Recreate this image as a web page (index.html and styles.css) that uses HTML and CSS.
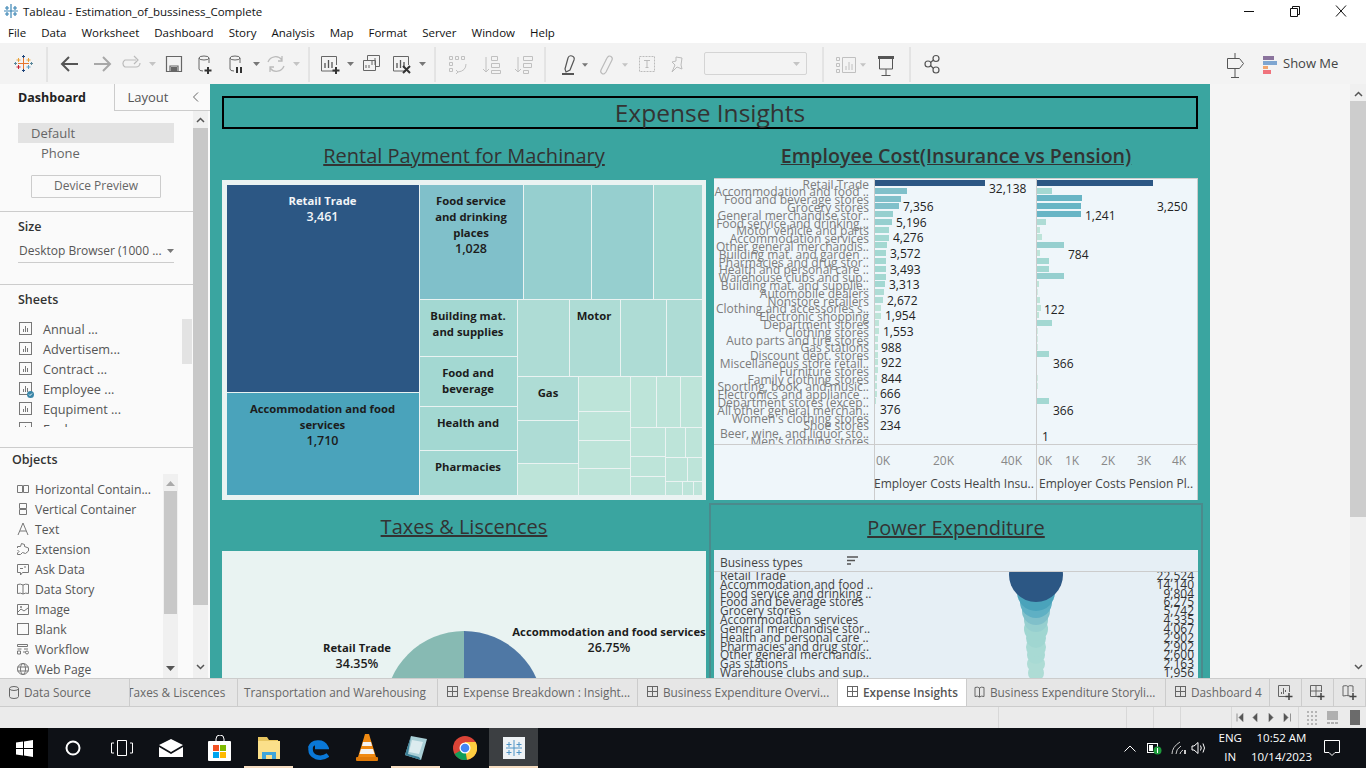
FILE: index.html
```html
<!DOCTYPE html>
<html lang="en">
<head>
    <meta charset="UTF-8">
    <title>Tableau - Estimation_of_bussiness_Complete</title>
    <link rel="stylesheet" href="styles.css">
</head>
<body>
<svg class="defs" width="0" height="0">
    <symbol id="sheet" viewBox="0 0 14 14"><rect x=".5" y=".5" width="12" height="12" fill="none" stroke="#777"/><path d="M4.5 10V7M6.5 10V4M8.5 10V6" stroke="#777"/></symbol>
    <symbol id="dash" viewBox="0 0 12 12"><rect x=".5" y=".5" width="10" height="10" fill="none" stroke="#666"/><path d="M.5 5.5h10M5.5 .5v10" stroke="#666"/></symbol>
    <symbol id="book" viewBox="0 0 12 12"><path d="M1 1.5q2.5-1 4.5.5q2-1.500 4.500-.5v9q-2.500-1-4.500 .5q-2-1.500-4.500-.5zM5.500 2v9" fill="none" stroke="#666"/></symbol>
    <symbol id="caret" viewBox="0 0 7 4"><path d="M0 0h7L3.500 4z" fill="#777"/></symbol>
    <symbol id="caret-off" viewBox="0 0 7 4"><path d="M0 0h7L3.500 4z" fill="#c4c4c4"/></symbol>
</svg>

<div class="app">
    <div class="titlebar">
        <svg class="title-logo" width="16" height="16" viewBox="0 0 16 16"><path d="M8 1v14M1 8h14M4 3v4M2 5h4M12 3v4M10 5h4M4 9v4M2 11h4M12 9v4M10 11h4" stroke="#3c86b5" stroke-width="1.200"/></svg>
        <span class="title-text">Tableau - Estimation_of_bussiness_Complete</span>
        <div class="win-btns">
            <svg width="12" height="12" viewBox="0 0 12 12"><path d="M1 6.500h10" stroke="#111"/></svg>
            <svg width="12" height="12" viewBox="0 0 12 12"><path d="M1.500 3.500h7v8h-7zM3.500 3.500v-2h7v8h-2" fill="none" stroke="#111"/></svg>
            <svg width="12" height="12" viewBox="0 0 12 12"><path d="M1 .5l10 11M11 .5l-10 11" stroke="#111"/></svg>
        </div>
    </div>
    <div class="menubar">
        <span>File</span><span>Data</span><span>Worksheet</span><span>Dashboard</span><span>Story</span><span>Analysis</span><span>Map</span><span>Format</span><span>Server</span><span>Window</span><span>Help</span>
    </div>

    <div class="toolbar">
        <svg class="tb-art" width="1366" height="41" viewBox="0 43 1366 41">
            <!-- logo -->
            <g stroke-width="1">
                <path d="M23.500 58v11M18 63.500h11" stroke="#e8762d"/>
                <path d="M18.500 58v4M16.500 60h4M28.500 58v4M26.500 60h4" stroke="#e9a23b"/>
                <path d="M18.500 65v4M16.500 67h4" stroke="#c72035"/>
                <path d="M28.500 65v4M26.500 67h4" stroke="#5a9bc4"/>
                <path d="M23.500 55v3M22 56.500h3M23.500 69v3M22 70.500h3" stroke="#1f447a"/>
                <path d="M15.500 62v3M14 63.500h3M31.500 62v3M30 63.500h3" stroke="#59879b"/>
            </g>
            <path d="M47 47v35M309 47v35M435 47v35M545 47v35M823 47v35M910 47v35" stroke="#d4d4d4"/>
            <!-- back / forward / redo -->
            <path d="M78 64H63M69 57l-7 7 7 7" fill="none" stroke="#555" stroke-width="2"/>
            <path d="M94 64h15M103 57l7 7-7 7" fill="none" stroke="#a8a8a8" stroke-width="2"/>
            <path d="M136 60h-11a4 4 0 0 0 0 7h11a4 4 0 0 0 4-4M134 56l4 4-4 4" fill="none" stroke="#bbb" stroke-width="1.200"/>
            <use href="#caret-off" x="149" y="62" width="7" height="4"/>
            <!-- save -->
            <path d="M166.500 56.500h15v15h-15zM170 71v-5h8v5" fill="none" stroke="#666" stroke-width="1.200"/><rect x="171" y="67" width="6" height="4" fill="#666"/>
            <!-- data source + -->
            <ellipse cx="204" cy="58" rx="5" ry="2" fill="none" stroke="#666"/>
            <path d="M199 58v11q0 2 4 2M209 58v5" fill="none" stroke="#666"/>
            <path d="M208 67v7M204.500 70.500h7" stroke="#333" stroke-width="2"/>
            <!-- pause -->
            <ellipse cx="235" cy="58" rx="5" ry="2" fill="none" stroke="#666"/>
            <path d="M230 58v11q0 2 4 2M240 58v5" fill="none" stroke="#666"/>
            <path d="M237 67v6M241 67v6" stroke="#333" stroke-width="2"/>
            <use href="#caret" x="253" y="62" width="7" height="4"/>
            <!-- refresh -->
            <path d="M268 62a8 8 0 0 1 14-2M284 66a8 8 0 0 1-14 2M282 56v5h-4M270 72v-5h4" fill="none" stroke="#bbb" stroke-width="1.300"/>
            <use href="#caret-off" x="293" y="62" width="7" height="4"/>
            <!-- new sheet -->
            <path d="M336 71h-14.500V56.500h15V65" fill="none" stroke="#666"/><path d="M325 68v-5M328.500 68v-8M332 68v-6" stroke="#555" stroke-width="1.300"/>
            <path d="M336 67v7M332.500 70.500h7" stroke="#333" stroke-width="2"/>
            <use href="#caret" x="347" y="62" width="7" height="4"/>
            <!-- duplicate -->
            <path d="M367.500 60v-4.500h12v11H376M363.500 60.500h12v10h-12z" fill="#f3f3f3" stroke="#666"/><path d="M372 65v-5M375 65v-7M366 68v-3M369 68v-3" stroke="#666"/>
            <!-- clear -->
            <path d="M406 71h-12.500V56.500h15V65" fill="none" stroke="#666"/><path d="M397 68v-5M400.500 68v-8M404 68v-6" stroke="#555" stroke-width="1.300"/>
            <path d="M403 66l7 7M410 66l-7 7" stroke="#333" stroke-width="2"/>
            <use href="#caret" x="419" y="62" width="7" height="4"/>
            <!-- swap / sort -->
            <g fill="none" stroke="#c0c0c0">
                <path d="M449.500 56.500h3v3h-3zM455.500 56.500h3v3h-3zM461.500 56.500h3v3h-3zM449.500 62.500h3v3h-3zM449.500 68.500h3v3h-3zM466 64q0 7-8 8M456 70l2 2-2 2"/>
                <path d="M486 57v15M483 69l3 3 3-3M491.500 56.500h6v4h-6zM491.500 63.500h8v4h-8zM491.500 70.500h9v3h-9z"/>
                <path d="M518 57v15M515 69l3 3 3-3M523.500 56.500h9v4h-9zM523.500 63.500h8v4h-8zM523.500 70.500h5v3h-5z"/>
            </g>
            <!-- highlight -->
            <path d="M565 69l3-11q1-3 4-2t2 4l-4 10-4 2z" fill="none" stroke="#555" stroke-width="1.200"/><rect x="562" y="73" width="12" height="2" fill="#555"/>
            <use href="#caret" x="582" y="63" width="6" height="4"/>
            <!-- clip -->
            <path d="M601 70l6-12q2-3 4-1.500t1 3.500l-6 12q-2 3-4 1.500t-1-3.500l5-10" fill="none" stroke="#bbb" stroke-width="1.200"/>
            <use href="#caret-off" x="622" y="63" width="6" height="4"/>
            <!-- text box -->
            <rect x="639.500" y="56.500" width="15" height="15" fill="none" stroke="#bbb" stroke-dasharray="2 1"/><path d="M644 60.500h6M647 60.500v7M645.500 67.500h3" fill="none" stroke="#bbb"/>
            <!-- pin -->
            <path d="M676 57l6 1-1 7 1 4-5-2-5 5 3-7-3-3 4-1z" fill="none" stroke="#bbb"/>
            <!-- show cards -->
            <g fill="none" stroke="#c0c0c0"><path d="M836.500 57.500h3v3h-3zM836.500 63.500h3v3h-3zM836.500 69.500h3v3h-3z"/><path d="M842.500 57.500h13v15h-13z"/><path d="M846 70v-4M849 70v-8M852 70v-6"/></g>
            <use href="#caret-off" x="860" y="63" width="6" height="4"/>
            <!-- presentation -->
            <path d="M878 57.500h16M879.500 58v11h13V58M886 69v6M881.500 75.500h9" fill="none" stroke="#555"/><rect x="878" y="56" width="16" height="3" fill="#555"/>
            <!-- share -->
            <g fill="none" stroke="#555" stroke-width="1.200"><circle cx="936" cy="58.500" r="3"/><circle cx="928" cy="64" r="3"/><circle cx="936" cy="70" r="3"/><path d="M933.500 60l-3 2.500M930.500 65.500l3 3"/></g>
            <!-- guide -->
            <path d="M1235 53v5M1235 69v8M1231 77.500h8M1227.500 58.500h12l4 5-4 5h-12z" fill="none" stroke="#555"/>
            <!-- show me -->
            <rect x="1263" y="56" width="11" height="4" fill="#8a739c"/><rect x="1263" y="61" width="14" height="4" fill="#7ea6d1"/><rect x="1263" y="66" width="5" height="3" fill="#f2a66e"/><rect x="1263" y="70" width="8" height="4" fill="#f0737c"/>
        </svg>
        <div class="tb-select"><svg width="7" height="4" viewBox="0 0 7 4"><use href="#caret-off"/></svg></div>
        <span class="show-me">Show Me</span>
    </div>

    <div class="main">
        <aside class="side">
            <div class="side-panel">
                <div class="side-tabs">
                    <div class="side-tab active">Dashboard</div>
                    <div class="side-tab">Layout</div>
                    <div class="side-tab-end"><svg width="7" height="10" viewBox="0 0 7 10"><path d="M6 .5L1.500 5 6 9.500" fill="none" stroke="#666"/></svg></div>
                </div>
                <div class="sec sec-device">
                    <div class="device on">Default</div>
                    <div class="device sub">Phone</div>
                    <div class="device-btn">Device Preview</div>
                </div>
                <div class="sec sec-size">
                    <div class="sec-head">Size</div>
                    <div class="size-select"><span>Desktop Browser (1000 ...</span><svg width="7" height="4" viewBox="0 0 7 4"><use href="#caret"/></svg></div>
                </div>
                <div class="sec sec-sheets">
                    <div class="sec-head">Sheets</div>
                    <div class="sheets-body">
                        <ul class="sheet-list">
                            <li><svg width="14" height="14"><use href="#sheet"/></svg>Annual ...</li>
                            <li><svg width="14" height="14"><use href="#sheet"/></svg>Advertisem...</li>
                            <li><svg width="14" height="14"><use href="#sheet"/></svg>Contract ...</li>
                            <li><svg width="14" height="14"><use href="#sheet"/></svg><svg class="tick" width="7" height="7" viewBox="0 0 7 7"><circle cx="3.500" cy="3.500" r="3.500" fill="#3a86a8"/><path d="M2 3.500l1 1 2-2" fill="none" stroke="#fff"/></svg>Employee ...</li>
                            <li><svg width="14" height="14"><use href="#sheet"/></svg>Equpiment ...</li>
                            <li><svg width="14" height="14"><use href="#sheet"/></svg>Fuel ...</li>
                        </ul>
                        <div class="sheet-scroll"><div class="sheet-thumb"></div></div>
                    </div>
                </div>
                <div class="sec sec-objects">
                    <div class="sec-head">Objects</div>
                    <div class="objects-body">
                        <ul class="object-list">
                            <li><svg width="14" height="14" viewBox="0 0 14 14"><path d="M1.500 3.500h5v7h-5zM7.500 3.500h5v7h-5z" fill="none" stroke="#777"/></svg>Horizontal Contain...</li>
                            <li><svg width="14" height="14" viewBox="0 0 14 14"><path d="M3.500 1.500h7v5h-7zM3.500 7.500h7v5h-7z" fill="none" stroke="#777"/></svg>Vertical Container</li>
                            <li><svg width="14" height="14" viewBox="0 0 14 14"><path d="M2 13L7 1l5 12M4 9h6" fill="none" stroke="#777"/></svg>Text</li>
                            <li><svg width="14" height="14" viewBox="0 0 14 14"><path d="M1.500 6V4.500h3l1-3 3 1v2l4 1.500v3l-3 2.500-3-1-2 2h-3V11l1.500-1.500L1.500 8" fill="none" stroke="#777"/></svg>Extension</li>
                            <li><svg width="14" height="14" viewBox="0 0 14 14"><path d="M1.500 2.500h11v8h-6l-2 2.500v-2.500h-3zM4 6.500h3M8 5h2" fill="none" stroke="#777"/></svg>Ask Data</li>
                            <li><svg width="14" height="14" viewBox="0 0 14 14"><path d="M1.500 2.500q3-1 5.500.5q2.500-1.500 5.500-.5v9q-3-1-5.500 .5q-2.500-1.500-5.500-.5zM7 3v9" fill="none" stroke="#777"/></svg>Data Story</li>
                            <li><svg width="14" height="14" viewBox="0 0 14 14"><path d="M1.500 2.500h11v10h-11zM2 10l3-3 3 2 4-3" fill="none" stroke="#777"/><circle cx="5" cy="5" r="1" fill="#777"/></svg>Image</li>
                            <li><svg width="14" height="14" viewBox="0 0 14 14"><rect x="1.500" y="1.500" width="11" height="11" fill="none" stroke="#777"/></svg>Blank</li>
                            <li><svg width="14" height="14" viewBox="0 0 14 14"><path d="M1.500 2.500h10v2h-10zM1.500 7h4M8 7h4M1.500 9h3v3h-3zM7 10h3" fill="none" stroke="#777"/><circle cx="11" cy="10.500" r="1.500" fill="none" stroke="#777"/></svg>Workflow</li>
                            <li><svg width="14" height="14" viewBox="0 0 14 14"><g fill="none" stroke="#777"><circle cx="7" cy="7" r="5.500"/><ellipse cx="7" cy="7" rx="2.500" ry="5.500"/><path d="M1.500 5h11M1.500 9h11"/></g></svg>Web Page</li>
                        </ul>
                        <div class="obj-scroll">
                            <svg width="9" height="5" viewBox="0 0 9 5"><path d="M4.500 0L9 5H0z" fill="#aaa"/></svg>
                            <div class="obj-thumb"></div>
                            <svg width="9" height="5" viewBox="0 0 9 5"><path d="M4.500 5L9 0H0z" fill="#555"/></svg>
                        </div>
                    </div>
                </div>
            </div>
            <div class="vscroll side-scroll">
                <svg width="9" height="6" viewBox="0 0 9 6"><path d="M1 5l3.500-3.500L8 5" fill="none" stroke="#555" stroke-width="1.500"/></svg>
                <div class="side-thumb"></div>
                <svg class="push" width="9" height="6" viewBox="0 0 9 6"><path d="M1 1l3.500 3.500L8 1" fill="none" stroke="#555" stroke-width="1.500"/></svg>
            </div>
        </aside>

        <section class="dash">
            <div class="dash-title">Expense Insights</div>
            <div class="dash-grid">
                <div class="cell">
                    <h2 class="chart-title">Rental Payment for Machinary</h2>
                    <svg class="treemap" width="484" height="320" viewBox="222 180 484 320">
                        <rect class="c1" x="227" y="185" width="192" height="207"/>
                        <rect class="c2" x="227" y="393" width="192" height="102"/>
                        <rect class="c3" x="420" y="185" width="103" height="114"/>
                        <rect class="c4" x="524" y="185" width="67" height="114"/>
                        <rect class="c4" x="592" y="185" width="61" height="114"/>
                        <rect class="c5" x="654" y="185" width="48" height="114"/>
                        <rect class="c5" x="420" y="300" width="97" height="56"/>
                        <rect class="c5" x="420" y="357" width="97" height="49"/>
                        <rect class="c5" x="420" y="407" width="97" height="43"/>
                        <rect class="c5" x="420" y="451" width="97" height="44"/>
                        <rect class="c6" x="518" y="300" width="51" height="76"/>
                        <rect class="c6" x="570" y="300" width="50" height="76"/>
                        <rect class="c6" x="621" y="300" width="45" height="76"/>
                        <rect class="c6" x="667" y="300" width="35" height="76"/>
                        <rect class="c6" x="518" y="377" width="60" height="43"/>
                        <rect class="c6" x="518" y="421" width="60" height="42"/>
                        <rect class="c7" x="518" y="464" width="60" height="31"/>
                        <rect class="c7" x="579" y="377" width="51" height="34"/>
                        <rect class="c7" x="579" y="412" width="51" height="28"/>
                        <rect class="c7" x="579" y="441" width="51" height="27"/>
                        <rect class="c7" x="579" y="469" width="51" height="26"/>
                        <rect class="c7" x="631" y="377" width="25" height="50"/>
                        <rect class="c7" x="657" y="377" width="23" height="50"/>
                        <rect class="c7" x="681" y="377" width="21" height="50"/>
                        <rect class="c7" x="631" y="428" width="34" height="28"/>
                        <rect class="c7" x="631" y="457" width="34" height="19"/>
                        <rect class="c7" x="631" y="477" width="34" height="18"/>
                        <rect class="c7" x="666" y="428" width="19" height="29"/>
                        <rect class="c7" x="686" y="428" width="16" height="29"/>
                        <rect class="c7" x="666" y="458" width="21" height="23"/>
                        <rect class="c7" x="688" y="458" width="14" height="23"/>
                        <rect class="c7" x="666" y="482" width="16" height="13"/>
                        <rect class="c7" x="683" y="482" width="10" height="13"/>
                        <rect class="c7" x="694" y="482" width="8" height="13"/>
                        <g class="tm-text">
                            <text class="light" x="322.500" y="205">Retail Trade</text>
                            <text class="light val" x="322.500" y="221">3,461</text>
                            <text x="322.500" y="413">Accommodation and food</text>
                            <text x="322.500" y="429">services</text>
                            <text class="val" x="322.500" y="445">1,710</text>
                            <text x="471" y="205">Food service</text>
                            <text x="471" y="221">and drinking</text>
                            <text x="471" y="237">places</text>
                            <text class="val" x="471" y="253">1,028</text>
                            <text x="468" y="320">Building mat.</text>
                            <text x="468" y="336">and supplies</text>
                            <text x="468" y="377">Food and</text>
                            <text x="468" y="393">beverage</text>
                            <text x="468" y="427">Health and</text>
                            <text x="468" y="471">Pharmacies</text>
                            <text x="594" y="320">Motor</text>
                            <text x="548" y="397">Gas</text>
                        </g>
                    </svg>
                </div>
                <div class="cell inset">
                    <h2 class="chart-title short bold">Employee Cost(Insurance vs Pension)</h2>
                    <svg class="bars" width="484" height="322" viewBox="714 178 484 322">
                        <defs><clipPath id="labelClip"><rect x="714" y="180" width="160" height="264"/></clipPath></defs>
                        <path class="rule" d="M714 178.500h484M714 444.500h484M874.500 178v322M1036.500 178v322M1197.500 178v322"/>
                        <g class="bar-labels" clip-path="url(#labelClip)">
                            <text x="869" y="188.500">Retail Trade</text>
                            <text x="869" y="196.300">Accommodation and food ..</text>
                            <text x="869" y="204.100">Food and beverage stores</text>
                            <text x="869" y="211.900">Grocery stores</text>
                            <text x="869" y="219.700">General merchandise stor..</text>
                            <text x="869" y="227.500">Food service and drinking ..</text>
                            <text x="869" y="235.300">Motor vehicle and parts</text>
                            <text x="869" y="243.100">Accommodation services</text>
                            <text x="869" y="250.900">Other general merchandis..</text>
                            <text x="869" y="258.700">Building mat. and garden ..</text>
                            <text x="869" y="266.500">Pharmacies and drug stor..</text>
                            <text x="869" y="274.300">Health and personal care ..</text>
                            <text x="869" y="282.100">Warehouse clubs and sup..</text>
                            <text x="869" y="289.900">Building mat. and supplie..</text>
                            <text x="869" y="297.700">Automobile dealers</text>
                            <text x="869" y="305.500">Nonstore retailers</text>
                            <text x="869" y="313.300">Clothing and accessories s..</text>
                            <text x="869" y="321.100">Electronic shopping</text>
                            <text x="869" y="328.900">Department stores</text>
                            <text x="869" y="336.700">Clothing stores</text>
                            <text x="869" y="344.500">Auto parts and tire stores</text>
                            <text x="869" y="352.300">Gas stations</text>
                            <text x="869" y="360.100">Discount dept. stores</text>
                            <text x="869" y="367.900">Miscellaneous store retail..</text>
                            <text x="869" y="375.700">Furniture stores</text>
                            <text x="869" y="383.500">Family clothing stores</text>
                            <text x="869" y="391.300">Sporting, book, and music..</text>
                            <text x="869" y="399.100">Electronics and appliance ..</text>
                            <text x="869" y="406.900">Department stores (excep..</text>
                            <text x="869" y="414.700">All other general merchan..</text>
                            <text x="869" y="422.500">Women's clothing stores</text>
                            <text x="869" y="430.300">Shoe stores</text>
                            <text x="869" y="438.100">Beer, wine, and liquor sto..</text>
                            <text x="869" y="445.900">Men's clothing stores</text>
                        </g>
                        <g class="bar-rects">
                            <rect class="c1" x="875" y="180" width="110"/>
                            <rect class="c3" x="875" y="188" width="32"/>
                            <rect class="c3" x="875" y="196" width="26"/>
                            <rect class="c3" x="875" y="203" width="24"/>
                            <rect class="c4" x="875" y="211" width="18"/>
                            <rect class="c4" x="875" y="219" width="17"/>
                            <rect class="c5" x="875" y="227" width="14"/>
                            <rect class="c5" x="875" y="235" width="14"/>
                            <rect class="c5" x="875" y="242" width="12"/>
                            <rect class="c5" x="875" y="250" width="11"/>
                            <rect class="c5" x="875" y="258" width="11"/>
                            <rect class="c5" x="875" y="266" width="11"/>
                            <rect class="c5" x="875" y="274" width="11"/>
                            <rect class="c5" x="875" y="281" width="10"/>
                            <rect class="c6" x="875" y="289" width="9"/>
                            <rect class="c6" x="875" y="297" width="8"/>
                            <rect class="c7" x="875" y="305" width="6"/>
                            <rect class="c7" x="875" y="313" width="6"/>
                            <rect class="c7" x="875" y="320" width="4"/>
                            <rect class="c7" x="875" y="328" width="4"/>
                            <rect class="c7" x="875" y="336" width="3"/>
                            <rect class="c7" x="875" y="344" width="3"/>
                            <rect class="c7" x="875" y="352" width="3"/>
                            <rect class="c7" x="875" y="359" width="3"/>
                            <rect class="c7" x="875" y="367" width="3"/>
                            <rect class="c7" x="875" y="375" width="2"/>
                            <rect class="c7" x="875" y="383" width="2"/>
                            <rect class="c7" x="875" y="391" width="2"/>
                            <rect class="c7" x="875" y="398" width="1"/>

                            <rect class="c1" x="1037" y="180" width="116"/>
                            <rect class="c5" x="1037" y="188" width="15"/>
                            <rect class="c9" x="1037" y="195" width="45"/>
                            <rect class="c9" x="1037" y="203" width="44"/>
                            <rect class="c9" x="1037" y="211" width="44"/>
                            <rect class="c6" x="1037" y="219" width="9"/>
                            <rect class="c7" x="1037" y="227" width="3"/>
                            <rect class="c7" x="1037" y="234" width="5"/>
                            <rect class="c4" x="1037" y="242" width="27"/>
                            <rect class="c7" x="1037" y="250" width="3"/>
                            <rect class="c5" x="1037" y="258" width="12"/>
                            <rect class="c5" x="1037" y="266" width="12"/>
                            <rect class="c4" x="1037" y="273" width="27"/>
                            <rect class="c7" x="1037" y="281" width="2"/>
                            <rect class="c8" x="1037" y="289" width="1"/>
                            <rect class="c7" x="1037" y="297" width="3"/>
                            <rect class="c7" x="1037" y="305" width="4"/>
                            <rect class="c7" x="1037" y="312" width="2"/>
                            <rect class="c5" x="1037" y="320" width="15"/>
                            <rect class="c8" x="1037" y="328" width="1"/>
                            <rect class="c8" x="1037" y="336" width="1"/>
                            <rect class="c8" x="1037" y="344" width="1"/>
                            <rect class="c5" x="1037" y="351" width="12"/>
                            <rect class="c8" x="1037" y="375" width="1"/>
                            <rect class="c8" x="1037" y="383" width="1"/>
                            <rect class="c5" x="1037" y="398" width="12"/>
                        </g>
                        <g class="bar-values">
                            <text x="989" y="193">32,138</text>
                            <text x="903" y="211">7,356</text>
                            <text x="896" y="227">5,196</text>
                            <text x="893" y="242">4,276</text>
                            <text x="890" y="258">3,572</text>
                            <text x="890" y="274">3,493</text>
                            <text x="889" y="289">3,313</text>
                            <text x="887" y="305">2,672</text>
                            <text x="885" y="320">1,954</text>
                            <text x="883" y="336">1,553</text>
                            <text x="881" y="352">988</text>
                            <text x="881" y="367">922</text>
                            <text x="881" y="383">844</text>
                            <text x="880" y="398">666</text>
                            <text x="880" y="414">376</text>
                            <text x="880" y="430">234</text>
                            <text x="1157" y="211">3,250</text>
                            <text x="1085" y="220">1,241</text>
                            <text x="1068" y="259">784</text>
                            <text x="1044" y="314">122</text>
                            <text x="1053" y="368">366</text>
                            <text x="1053" y="415">366</text>
                            <text x="1042" y="441">1</text>
                        </g>
                        <g class="axis-ticks">
                            <text x="876" y="465">0K</text><text x="933" y="465">20K</text><text x="1001" y="465">40K</text>
                            <text x="1038" y="465">0K</text><text x="1065" y="465">1K</text><text x="1101" y="465">2K</text><text x="1137" y="465">3K</text><text x="1172" y="465">4K</text>
                        </g>
                        <g class="axis-names">
                            <text x="874" y="488">Employer Costs Health Insu..</text>
                            <text x="1039" y="488">Employer Costs Pension Pl..</text>
                        </g>
                    </svg>
                </div>
                <div class="cell">
                    <h2 class="chart-title">Taxes &amp; Liscences</h2>
                    <svg class="pie" width="484" height="127" viewBox="222 551 484 127">
                        <path class="pie-l" d="M464 631a79 79 0 0 0-79 79h79z"/>
                        <path class="pie-r" d="M464 631a79 79 0 0 1 79 79h-79z"/>
                        <g class="tm-text">
                            <text x="357" y="652">Retail Trade</text>
                            <text class="val" x="357" y="668">34.35%</text>
                            <text x="609" y="636">Accommodation and food services</text>
                            <text class="val" x="609" y="652">26.75%</text>
                        </g>
                    </svg>
                </div>
                <div class="cell power">
                    <h2 class="chart-title power-title">Power Expenditure</h2>
                    <svg class="funnel" width="484" height="128" viewBox="714 550 484 128">
                        <defs><clipPath id="rowClip"><rect x="714" y="572" width="484" height="106"/></clipPath></defs>
                        <text class="head" x="720" y="567">Business types</text>
                        <path class="sort" d="M847 557h11M847 560.500h8M847 564h4"/>
                        <path class="rule" d="M714 571.500h484"/>
                        <g clip-path="url(#rowClip)">
                            <circle class="f7" cx="1036" cy="673" r="8"/>
                            <circle class="f7" cx="1036" cy="664" r="9"/>
                            <circle class="f6" cx="1036" cy="655" r="9"/>
                            <circle class="f6" cx="1036" cy="647" r="10"/>
                            <circle class="f5" cx="1036" cy="638" r="10"/>
                            <circle class="f5" cx="1036" cy="629" r="12"/>
                            <circle class="f4" cx="1036" cy="620" r="12"/>
                            <circle class="f3" cx="1036" cy="611" r="14"/>
                            <circle class="f2b" cx="1036" cy="602" r="16"/>
                            <circle class="f2" cx="1036" cy="592" r="19"/>
                            <circle class="f1" cx="1036" cy="575" r="27"/>
                            <g class="row-labels">
                                <text x="720" y="580">Retail Trade</text>
                                <text x="720" y="589">Accommodation and food ..</text>
                                <text x="720" y="598">Food service and drinking ..</text>
                                <text x="720" y="606">Food and beverage stores</text>
                                <text x="720" y="615">Grocery stores</text>
                                <text x="720" y="624">Accommodation services</text>
                                <text x="720" y="633">General merchandise stor..</text>
                                <text x="720" y="642">Health and personal care ..</text>
                                <text x="720" y="651">Pharmacies and drug stor..</text>
                                <text x="720" y="659">Other general merchandis..</text>
                                <text x="720" y="668">Gas stations</text>
                                <text x="720" y="677">Warehouse clubs and sup..</text>
                            </g>
                            <g class="row-values">
                                <text x="1194" y="580">22,524</text>
                                <text x="1194" y="589">14,140</text>
                                <text x="1194" y="598">9,804</text>
                                <text x="1194" y="606">6,275</text>
                                <text x="1194" y="615">5,742</text>
                                <text x="1194" y="624">4,335</text>
                                <text x="1194" y="633">4,067</text>
                                <text x="1194" y="642">2,902</text>
                                <text x="1194" y="651">2,902</text>
                                <text x="1194" y="659">2,600</text>
                                <text x="1194" y="668">2,163</text>
                                <text x="1194" y="677">1,956</text>
                            </g>
                        </g>
                    </svg>
                </div>
            </div>
        </section>

        <div class="right-gap"></div>
        <div class="vscroll page-scroll">
            <svg width="9" height="6" viewBox="0 0 9 6"><path d="M1 5l3.500-3.500L8 5" fill="none" stroke="#555" stroke-width="1.500"/></svg>
            <div class="page-thumb"></div>
            <svg class="push" width="9" height="6" viewBox="0 0 9 6"><path d="M1 1l3.500 3.500L8 1" fill="none" stroke="#555" stroke-width="1.500"/></svg>
        </div>
    </div>

    <div class="tabs">
        <div class="tab t-source"><svg width="10" height="13" viewBox="0 0 10 13"><path d="M.5 2.500v8q0 2 4.500 2t4.500-2v-8M.5 2.500q0-2 4.500-2t4.500 2-4.500 2-4.500-2z" fill="none" stroke="#666"/></svg>Data Source</div>
        <div class="tab t-taxes"><span>Taxes &amp; Liscences</span></div>
        <div class="tab t-trans">Transportation and Warehousing</div>
        <div class="tab t-wide"><svg width="12" height="12"><use href="#dash"/></svg>Expense Breakdown : Insight...</div>
        <div class="tab t-wide"><svg width="12" height="12"><use href="#dash"/></svg>Business Expenditure Overvi...</div>
        <div class="tab t-active"><svg width="12" height="12"><use href="#dash"/></svg>Expense Insights</div>
        <div class="tab t-story"><svg width="12" height="12"><use href="#book"/></svg>Business Expenditure Storyli...</div>
        <div class="tab t-dash4"><svg width="12" height="12"><use href="#dash"/></svg>Dashboard 4</div>
        <div class="tab t-add"><svg width="17" height="17" viewBox="0 0 17 17"><path d="M9 12.500H1.500v-11h11V8" fill="none" stroke="#666"/><path d="M4.500 10V8M6.500 10V4M8.500 8V6" stroke="#666"/><path d="M12 9v7M8.500 12.500h7" stroke="#444" stroke-width="1.500"/></svg></div>
        <div class="tab t-add"><svg width="17" height="17" viewBox="0 0 17 17"><path d="M9 12.500H1.500v-11h11V8M1.500 7h11M7 1.500v11" fill="none" stroke="#666"/><path d="M12 9v7M8.500 12.500h7" stroke="#444" stroke-width="1.500"/></svg></div>
        <div class="tab t-add"><svg width="17" height="17" viewBox="0 0 17 17"><path d="M9 12q-3-1-7 0V2q4-1 5 .5q1-1.500 5-.5v6M7 2.500V12" fill="none" stroke="#666"/><path d="M12 9v7M8.500 12.500h7" stroke="#444" stroke-width="1.500"/></svg></div>
    </div>

    <div class="status">
        <div class="st-cell st-fill"></div>
        <div class="st-cell st-w128"></div>
        <div class="st-cell st-w27"></div>
        <div class="st-cell st-w27"></div>
        <div class="st-cell st-w51"></div>
        <div class="st-cell st-nav">
            <svg width="60" height="9" viewBox="0 0 60 9"><path d="M1 .5v8M7 .5L3 4.500l4 4zM21 .5l-4 4 4 4zM33 .5l4 4-4 4zM48 .5l4 4-4 4zM54.500 .5v8" fill="#555" stroke="#555" stroke-width=".6"/></svg>
        </div>
        <div class="st-view">
            <svg width="60" height="15" viewBox="0 0 60 15"><path d="M1 1h2v2H1zM5 1h2v2H5zM9 1h2v2H9zM1 5h2v2H1zM5 5h2v2H5zM9 5h2v2H9zM1 9h2v2H1zM5 9h2v2H5zM9 9h2v2H9zM1 13h2v2H1zM5 13h2v2H5zM9 13h2v2H9z" fill="#b5b5b5"/><rect x="21" y="1" width="11" height="9" fill="#b0b0b0"/><path d="M21 12h3v2h-3zM25 12h3v2h-3zM29 12h3v2h-3z" fill="#b0b0b0"/><rect x="44" y="0" width="10" height="15" fill="#6b6b6b"/></svg>
        </div>
    </div>

    <div class="taskbar">
        <div class="start"><svg width="17" height="17" viewBox="0 0 17 17"><path d="M0 2.500l7-1v6.500H0zM8 1.400l9-1.400v8H8zM0 9h7v6.500l-7-1zM8 9h9v8l-9-1.400z" fill="#fff"/></svg></div>
        <div class="task-icons">
            <div class="ti"><svg width="16" height="16" viewBox="0 0 16 16"><circle cx="8" cy="8" r="6.500" fill="none" stroke="#fff" stroke-width="2"/></svg></div>
            <div class="ti"><svg width="22" height="16" viewBox="0 0 22 16"><path d="M6.500 .5h9v15h-9zM3 3H.5v10H3M19 3h2.500v10H19" fill="none" stroke="#fff"/></svg></div>
            <div class="ti"><svg width="24" height="18" viewBox="0 0 24 18"><path d="M0 6l12-6 12 6-12 7zM0 8l12 7 12-7v10H0z" fill="#fff"/></svg></div>
            <div class="ti"><svg width="24" height="26" viewBox="0 0 24 26"><path d="M8 7V4a4 4 0 0 1 8 0v3" fill="none" stroke="#fff"/><rect y="6" width="23" height="20" rx="1" fill="#fff"/><rect x="5" y="10" width="6" height="6" fill="#f25022"/><rect x="12" y="10" width="6" height="6" fill="#7fba00"/><rect x="5" y="17" width="6" height="6" fill="#00a4ef"/><rect x="12" y="17" width="6" height="6" fill="#ffb900"/></svg></div>
            <div class="ti ti-run"><svg width="22" height="22" viewBox="0 0 22 22"><path d="M0 0h9l2 3h9v4H0z" fill="#e8c660"/><rect y="4" width="22" height="18" fill="#fbe08a"/><rect x="4" y="15" width="14" height="7" fill="#3fa5d9"/><rect x="8" y="18" width="6" height="4" fill="#fbe08a"/></svg></div>
            <div class="ti"><svg width="22" height="24" viewBox="0 0 22 24"><path d="M3 12a8.500 7.500 0 0 1 16-1H8M4 10q-2 8 5 11q7 2 12-2" fill="none" stroke="#0a78d7" stroke-width="4.500"/></svg></div>
            <div class="ti"><svg width="22" height="28" viewBox="0 0 22 28"><path d="M9 0h4l7 23H2z" fill="#f08a12"/><path d="M7 8h8l1 4H6zM5 15h12l1.500 5h-15z" fill="#f4f4f4"/><rect y="23" width="22" height="4" rx="1" fill="#e07a08"/></svg></div>
            <div class="ti ti-run"><svg width="24" height="26" viewBox="0 0 24 26"><path d="M7 1l16 3-6 21L1 20z" fill="#a9cfd6"/><path d="M7 1l-6 19 16 5-2-3-11-3z" fill="#3b7f96"/><path d="M8 5l11 2-4 12-10-2z" fill="#dcecef"/></svg></div>
            <div class="ti"><svg width="24" height="24" viewBox="0 0 24 24"><circle cx="12" cy="12" r="12" fill="#db4437"/><path d="M12 12L1.600 18A12 12 0 0 0 14 23.800z" fill="#0f9d58"/><path d="M12 6h10.600A12 12 0 0 1 14 23.800L12 12z" fill="#ffcd40"/><circle cx="12" cy="12" r="5.500" fill="#fff"/><circle cx="12" cy="12" r="4.300" fill="#4285f4"/></svg></div>
            <div class="ti ti-active ti-run"><svg width="22" height="22" viewBox="0 0 22 22"><rect width="22" height="22" fill="#eef2f5"/><path d="M11 3v16M3 11h16M6 5v5M3.500 7.500h5M16 5v5M13.500 7.500h5M6 13v5M3.500 15.500h5M16 13v5M13.500 15.500h5" stroke="#4f94c6"/></svg></div>
        </div>
        <div class="tray">
            <svg class="tray-a" width="12" height="7" viewBox="0 0 12 7"><path d="M.5 6.500L6 1l5.500 5.500" fill="none" stroke="#fff"/></svg>
            <svg class="tray-b" width="15" height="13" viewBox="0 0 15 13"><rect x=".5" y="1.500" width="10" height="9" fill="none" stroke="#fff"/><rect x="2" y="3" width="4" height="6" fill="#fff"/><circle cx="10.500" cy="8.500" r="4" fill="#1e9b3c"/><path d="M10.500 6v5" stroke="#fff"/></svg>
            <svg class="tray-c" width="16" height="14" viewBox="0 0 16 14"><path d="M1 13q0-7 8-12M5 13q0-5 5-8M9 13q0-2 3-4" fill="none" stroke="#ccc"/><path d="M13 9h2v4h-2z" fill="#ccc"/></svg>
            <svg class="tray-d" width="16" height="14" viewBox="0 0 16 14"><path d="M1 5h2l4-3.500v11L3 9H1zM9.500 4.500q1.500 2.500 0 5M12 2.500q3 4.500 0 9" fill="none" stroke="#fff"/></svg>
            <div class="tray-lang"><span>ENG</span><span>IN</span></div>
            <div class="tray-time"><span>10:52 AM</span><span>10/14/2023</span></div>
            <svg class="tray-note" width="16" height="16" viewBox="0 0 16 16"><path d="M.5 .5h15v12H11l-3 3-3-3H.5z" fill="none" stroke="#fff"/></svg>
        </div>
    </div>
</div>
</body>
</html>
```

FILE: styles.css
```css
* {
    box-sizing: border-box;
}
html, body {
    margin: 0;
    padding: 0;
    overflow: hidden;
}
body {
    font-family: "Open Sans", "Noto Sans", sans-serif;
    font-size: 12px;
    color: #333;
}
ul {
    list-style: none;
    margin: 0;
    padding: 0;
}
svg {
    display: block;
    flex: none;
}
.defs {
    position: absolute;
}
.app {
    width: 1366px;
    height: 768px;
    display: flex;
    flex-direction: column;
    background: #fff;
}

/* window chrome */
.titlebar {
    height: 22px;
    display: flex;
    align-items: center;
    padding-left: 3px;
    background: #fff;
}
.title-text {
    margin-left: 4px;
    font-size: 11.5px;
    color: #111;
}
.win-btns {
    margin-left: auto;
    display: flex;
    gap: 34px;
    padding-right: 19px;
}
.menubar {
    height: 21px;
    display: flex;
    align-items: center;
    padding-left: 8px;
    gap: 15px;
    font-size: 11.5px;
    color: #111;
}
.toolbar {
    height: 41px;
    position: relative;
    background: #f3f3f3;
}
.tb-art {
    position: absolute;
    left: 0;
    top: 0;
}
.tb-select {
    position: absolute;
    left: 704px;
    top: 9px;
    width: 103px;
    height: 23px;
    border: 1px solid #d4d4d4;
    border-radius: 2px;
    display: flex;
    align-items: center;
    justify-content: flex-end;
    padding-right: 6px;
}
.show-me {
    position: absolute;
    left: 1283px;
    top: 11px;
    font-size: 13px;
    color: #444;
}

/* main area */
.main {
    height: 594px;
    display: flex;
    overflow: hidden;
    background: #f5f5f5;
}
.side {
    width: 210px;
    display: flex;
    background: #fafafa;
}
.side-panel {
    width: 193px;
    display: flex;
    flex-direction: column;
}
.side-tabs {
    height: 27px;
    display: flex;
    width: 210px;
    font-size: 13px;
    flex: none;
    position: relative;
    z-index: 1;
}
.side-tab {
    display: flex;
    align-items: center;
    justify-content: center;
    color: #555;
    width: 67px;
    border-left: 1px solid #ccc;
    border-bottom: 1px solid #ccc;
}
.side-tab.active {
    width: 114px;
    border: none;
    font-size: 12.5px;
    font-weight: 700;
    color: #222;
    background: #fafafa;
    justify-content: flex-start;
    padding: 0 0 1px 18px;
}
.side-tab-end {
    flex: 1;
    display: flex;
    align-items: center;
    justify-content: center;
    border-bottom: 1px solid #ccc;
}
.sec {
    flex: none;
    border-bottom: 1px solid #ccc;
    padding-left: 18px;
}
.sec-head {
    font-size: 12.5px;
    font-weight: 600;
    color: #333;
}
.sec-device {
    height: 101px;
    padding-top: 12px;
    font-size: 13px;
    color: #666;
}
.device {
    width: 156px;
    height: 20px;
    line-height: 20px;
    padding-left: 13px;
}
.device.on {
    background: #e3e3e3;
}
.device.sub {
    padding-left: 23px;
}
.device-btn {
    margin: 12px 0 0 13px;
    width: 130px;
    height: 23px;
    line-height: 20px;
    text-align: center;
    border: 1px solid #ccc;
    border-radius: 1px;
    font-size: 12px;
    color: #666;
}
.sec-size {
    height: 73px;
    padding-top: 6px;
}
.size-select {
    margin-top: 6px;
    width: 156px;
    height: 22px;
    border-bottom: 1px solid #ccc;
    display: flex;
    align-items: center;
    justify-content: space-between;
    padding: 0 0 2px 1px;
    font-size: 12px;
    color: #555;
}
.sec-sheets {
    height: 163px;
    padding-top: 6px;
    border-bottom: 1px solid #ccc;
}
.sheets-body {
    display: flex;
    margin-top: 11px;
    height: 108px;
    margin-left: 1px;
}
.sheet-list {
    flex: 1;
    overflow: hidden;
}
.sheet-list li {
    height: 20px;
    display: flex;
    align-items: center;
    gap: 10px;
    font-size: 12.7px;
    color: #555;
    position: relative;
}
.tick {
    position: absolute;
    left: 8px;
    top: 12px;
}
.sheet-scroll {
    width: 10px;
    margin-right: 1px;
    background: #fafafa;
}
.sheet-thumb {
    height: 45px;
    background: #e3e3e3;
}
.sec-objects {
    flex: 1;
    border-bottom: none;
    padding: 3px 0 0 12px;
}
.objects-body {
    display: flex;
    height: 207px;
    margin-top: 6px;
}
.object-list {
    flex: 1;
    padding-top: 5px;
}
.object-list li {
    height: 20px;
    display: flex;
    align-items: center;
    gap: 5px;
    font-size: 12.2px;
    color: #555;
    margin-left: 4px;
}
.obj-scroll {
    width: 15px;
    margin-right: 15px;
    background: #f0f0f0;
    display: flex;
    flex-direction: column;
    align-items: center;
    padding-top: 7px;
}
.obj-thumb {
    width: 13px;
    height: 123px;
    margin: 5px 0 52px;
    background: #c8c8c8;
}
.vscroll {
    display: flex;
    flex-direction: column;
    align-items: center;
    background: #f0f0f0;
}
.push {
    margin-top: auto;
    margin-bottom: 8px;
}
.side-scroll {
    width: 15px;
    margin-top: 26px;
    padding-top: 7px;
}
.side-thumb {
    width: 15px;
    height: 477px;
    margin-top: 5px;
    background: #c8c8c8;
}

/* dashboard canvas */
.dash {
    width: 1000px;
    flex: none;
    padding: 12px 7px 0 12px;
    background: #3aa5a0;
    overflow: hidden;
}
.dash-title {
    width: 976px;
    height: 33px;
    border: 2px solid #000;
    text-align: center;
    font-size: 24.500px;
    line-height: 29px;
    color: #333;
}
.dash-grid {
    display: grid;
    grid-template-columns: 484px 494px;
    column-gap: 3px;
}
.inset {
    padding: 0 5px;
}
.chart-title {
    margin: 0;
    height: 51px;
    line-height: 54px;
    text-align: center;
    font-size: 20px;
    font-weight: 400;
    color: #333;
    text-decoration: underline;
}
.chart-title.short {
    height: 49px;
    line-height: 54px;
}
.chart-title.bold {
    font-size: 19.600px;
    font-weight: 600;
}
.power {
    margin-top: 3px;
    height: 180px;
    border: 2px solid #4b8a8c;
    border-bottom: none;
    padding: 0 3px;
}
.power-title {
    height: 45px;
    line-height: 45px;
}

/* charts */
.c1 { fill: #2c5784; }
.c2 { fill: #4aa3bb; }
.c3 { fill: #80c0ca; }
.c4 { fill: #96cfcf; }
.c5 { fill: #a3d8d2; }
.c6 { fill: #aedcd5; }
.c7 { fill: #bde4d9; }
.c8 { fill: #d0ebe3; }
.c9 { fill: #68b5c5; }
.treemap {
    background: #eaf3f2;
}
.tm-text text {
    font-size: 11.300px;
    font-weight: 700;
    text-anchor: middle;
    fill: #1c1c1c;
}
.tm-text .light {
    fill: #f2f5f8;
}
.tm-text .val {
    font-size: 12.500px;
    font-weight: 600;
}
.bars {
    background: #eff6fa;
}
.bars .rule,
.funnel .rule {
    stroke: #ccc;
    fill: none;
}
.bar-labels text {
    font-size: 12px;
    text-anchor: end;
    fill: #7c7c7c;
}
.bar-rects rect {
    height: 6px;
}
.bar-values text {
    font-size: 12px;
    fill: #222;
}
.axis-ticks text {
    font-size: 12px;
    fill: #888;
}
.axis-names text {
    font-size: 12px;
    fill: #444;
}
.pie {
    background: #e9f3f2;
}
.pie-l { fill: #87bab3; }
.pie-r { fill: #4f78a5; }
.funnel {
    background: #e6eff5;
}
.funnel .head {
    font-size: 12px;
    fill: #444;
}
.funnel .sort {
    stroke: #555;
    stroke-width: 1.500;
}
.f1 { fill: #2c5784; }
.f2 { fill: #4aa3bb; }
.f2b { fill: #5fb0c4; }
.f3 { fill: #80c0ca; }
.f4 { fill: #96cfcf; }
.f5 { fill: #a0d6d1; }
.f6 { fill: #a8dad4; }
.f7 { fill: #aedcd5; }
.row-labels text {
    font-size: 11.900px;
    fill: #444;
}
.row-values text {
    font-size: 12px;
    text-anchor: end;
    fill: #333;
}
.right-gap {
    width: 140px;
    flex: none;
}
.page-scroll {
    width: 16px;
    padding-top: 7px;
}
.page-thumb {
    width: 16px;
    height: 416px;
    margin-top: 4px;
    background: #cdcdcd;
}

/* sheet tabs */
.tabs {
    height: 29px;
    display: flex;
    flex: none;
    background: #e6e6e6;
    border-top: 1px solid #ccc;
    border-bottom: 1px solid #ccc;
    font-size: 11.800px;
    color: #666;
}
.tab {
    display: flex;
    align-items: center;
    gap: 4px;
    border-right: 1px solid #ccc;
    white-space: nowrap;
    overflow: hidden;
    padding: 0 0 1px 9px;
}
.t-source { width: 130px; gap: 5px; }
.t-taxes { width: 108px; padding-left: 0; }
.t-taxes span { margin-left: -3px; }
.t-trans { width: 200px; padding-left: 6px; }
.t-wide { width: 200px; }
.t-active {
    width: 129px;
    background: #fff;
    font-weight: 600;
    color: #555;
}
.t-story { width: 199px; padding-left: 7px; }
.t-dash4 { width: 104px; }
.t-add { width: 32px; padding-left: 7px; }

/* status bar */
.status {
    height: 21px;
    display: flex;
    flex: none;
    background: #ebebeb;
}
.st-cell {
    border-right: 1px solid #d8d8d8;
    flex: none;
}
.st-fill { width: 999px; }
.st-w128 { width: 128px; }
.st-w27 { width: 27px; }
.st-w51 { width: 51px; }
.st-nav {
    width: 67px;
    display: flex;
    align-items: center;
    padding-left: 4px;
}
.st-view {
    flex: 1;
    display: flex;
    align-items: center;
    padding-left: 7px;
}

/* windows taskbar */
.taskbar {
    height: 40px;
    flex: 1;
    display: flex;
    align-items: center;
    background: #0e1116;
}
.start {
    width: 48px;
    height: 40px;
    display: flex;
    align-items: center;
    justify-content: center;
    background: #000;
}
.task-icons {
    display: flex;
    height: 40px;
}
.ti {
    width: 49px;
    height: 40px;
    display: flex;
    align-items: center;
    justify-content: center;
}
.ti-active {
    background: #3c3f42;
}
.ti-run {
    box-shadow: inset 0 -2px 0 #f5dcc0;
}
.tray {
    margin-left: auto;
    display: flex;
    align-items: center;
    color: #fff;
    font-size: 11.5px;
    padding-right: 26px;
}
.tray-b { margin-left: 11px; }
.tray-c { margin-left: 9px; }
.tray-d { margin-left: 4px; }
.tray-lang,
.tray-time {
    display: flex;
    flex-direction: column;
    align-items: center;
    gap: 4px;
    padding-bottom: 2px;
}
.tray-lang { margin-left: 12px; }
.tray-time { margin-left: 9px; }
.tray-note { margin-left: 12px; }
```
